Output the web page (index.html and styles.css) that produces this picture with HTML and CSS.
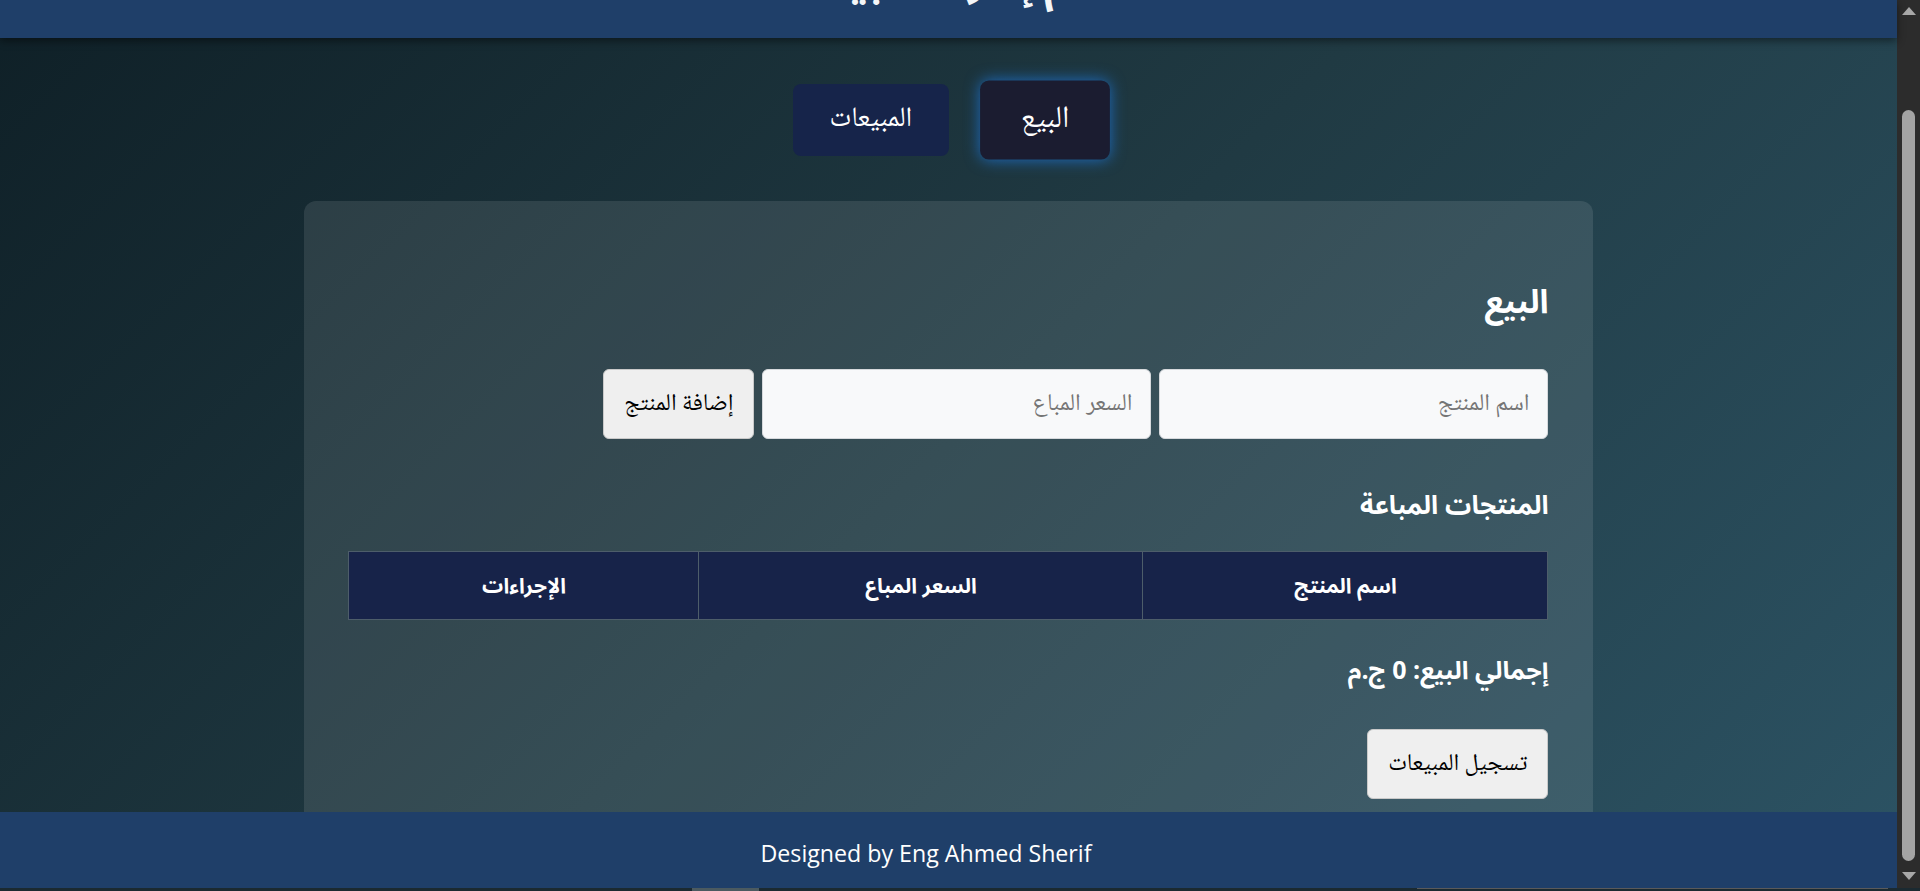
FILE: index.html
```html
<!DOCTYPE html>
<html lang="ar" dir="rtl">
<head>
<meta charset="utf-8">
<title>نظام إدارة المبيعات</title>
<link rel="stylesheet" href="styles.css">
</head>
<body>
<div class="viewport">
  <div class="page">
    <header class="topbar">
      <h1 class="title">نظام إدارة المبيعات</h1>
    </header>
    <main class="main">
      <nav class="tabs">
        <button class="tab tab-active">البيع</button>
        <button class="tab">المبيعات</button>
      </nav>
      <section class="card">
        <h2 class="card-title">البيع</h2>
        <div class="form-row">
          <input class="field" type="text" placeholder="اسم المنتج">
          <input class="field" type="text" placeholder="السعر المباع">
          <button class="btn">إضافة المنتج</button>
        </div>
        <h3 class="section-title">المنتجات المباعة</h3>
        <table class="sales-table">
          <colgroup>
            <col class="col-name">
            <col class="col-price">
            <col class="col-actions">
          </colgroup>
          <thead>
            <tr>
              <th>اسم المنتج</th>
              <th>السعر المباع</th>
              <th>الإجراءات</th>
            </tr>
          </thead>
          <tbody></tbody>
        </table>
        <h3 class="total">إجمالي البيع: 0 ج.م</h3>
        <button class="btn btn-save">تسجيل المبيعات</button>
      </section>
    </main>
    <footer class="footer">
      <p class="footer-text">Designed by Eng Ahmed Sherif</p>
    </footer>
  </div>
  <div class="scrollbar">
    <span class="arrow arrow-up"></span>
    <span class="thumb"></span>
    <span class="arrow arrow-down"></span>
  </div>
</div>
<div class="hstrip">
  <span class="hseg hseg-a"></span>
  <span class="hseg hseg-b"></span>
</div>
</body>
</html>
```
FILE: styles.css
```css
html, body {
  margin: 0;
  padding: 0;
  height: 891px;
  overflow: hidden;
  background: #1a2a32;
}

body {
  font-family: "Noto Sans Arabic", "DejaVu Sans", sans-serif;
}

.viewport {
  display: flex;
  direction: ltr;
  height: 888px;
}

.page {
  flex: 1;
  min-width: 0;
  direction: rtl;
  display: flex;
  flex-direction: column;
  background: linear-gradient(135deg, #0f2027 0%, #203a43 50%, #2c5364 100%);
}

.topbar {
  flex: none;
  height: 38px;
  background: #1f3f69;
  overflow: hidden;
  position: relative;
  z-index: 2;
  box-shadow: 0 3px 8px rgba(0, 0, 0, 0.45);
}

.title {
  margin: -49px 0 0;
  text-align: center;
  color: #f4f6f8;
  font-size: 44px;
  font-weight: 700;
  line-height: 60px;
}

.main {
  flex: 1;
  overflow: hidden;
  padding-top: 46px;
}

.tabs {
  display: flex;
  justify-content: center;
  gap: 37px;
}

.tab {
  height: 72px;
  padding: 0 37px;
  border: none;
  border-radius: 8px;
  background: #16244a;
  color: #ffffff;
  font-family: "Noto Naskh Arabic", "DejaVu Sans", serif;
  font-size: 28px;
}

.tab-active {
  background: #1b1c30;
  transform: scale(1.1);
  box-shadow: 0 0 14px rgba(30, 120, 220, 0.8);
}

.card {
  width: 68%;
  box-sizing: border-box;
  margin: 45px auto 0;
  padding: 82px 45px 120px;
  background: rgba(255, 255, 255, 0.1);
  border-radius: 12px;
  color: #ffffff;
}

.card-title {
  margin: 0 0 46px;
  font-size: 33px;
  line-height: 40px;
  font-weight: 700;
}

.form-row {
  display: flex;
  gap: 8px;
}

.field {
  width: 389px;
  height: 70px;
  box-sizing: border-box;
  padding: 0 18px;
  border: 1px solid #d6d9dc;
  border-radius: 6px;
  background: #f8f9fa;
  font-family: "Noto Naskh Arabic", "DejaVu Sans", serif;
  font-size: 24px;
  color: #222;
}

.field::placeholder {
  color: #757575;
}

.btn {
  height: 70px;
  box-sizing: border-box;
  padding: 0 20px;
  border: 1px solid #c9c9c9;
  border-radius: 6px;
  background: #efefef;
  color: #000000;
  font-family: "Noto Naskh Arabic", "DejaVu Sans", serif;
  font-size: 24px;
}

.section-title {
  margin: 50px 0 28px;
  font-size: 26px;
  line-height: 34px;
  font-weight: 700;
}

.sales-table {
  width: 100%;
  table-layout: fixed;
  border-collapse: collapse;
}

.col-name { width: 405px; }
.col-price { width: 444px; }
.col-actions { width: 350px; }

.sales-table th {
  height: 68px;
  box-sizing: border-box;
  padding: 0 10px;
  background: #172349;
  border: 1px solid #4d5d6a;
  color: #ffffff;
  font-size: 21px;
  font-weight: 700;
  text-align: center;
}

.total {
  margin: 34px 0 41px;
  font-size: 25px;
  line-height: 34px;
  font-weight: 700;
}

.btn-save {
  display: block;
}

.footer {
  flex: none;
  height: 76px;
  box-sizing: border-box;
  padding: 6px 45px 0 0;
  display: flex;
  align-items: center;
  justify-content: center;
  background: #1f3f69;
  position: relative;
  z-index: 2;
}

.footer-text {
  margin: 0;
  direction: ltr;
  color: #ffffff;
  font-family: "Open Sans", "Noto Sans", sans-serif;
  font-size: 23.2px;
}

.scrollbar {
  flex: none;
  width: 23px;
  box-sizing: border-box;
  padding: 7px 0 8px;
  background: #2c2c2c;
  display: flex;
  flex-direction: column;
  align-items: center;
}

.arrow {
  width: 0;
  height: 0;
  border-left: 7px solid transparent;
  border-right: 7px solid transparent;
}

.arrow-up {
  border-bottom: 8px solid #a8a8a8;
}

.arrow-down {
  margin-top: 11px;
  border-top: 8px solid #a8a8a8;
}

.thumb {
  flex: 1;
  width: 13px;
  margin-top: 95px;
  border-radius: 7px;
  background: #a4a4a4;
}

.hstrip {
  height: 3px;
  display: flex;
  direction: ltr;
  background: #1b2a31;
}

.hseg-a {
  margin-left: 692px;
  width: 67px;
  background: #4b5a60;
}

.hseg-b {
  margin-left: 658px;
  width: 471px;
  border-top: 1px solid #5a5a5a;
  box-sizing: border-box;
}
```
